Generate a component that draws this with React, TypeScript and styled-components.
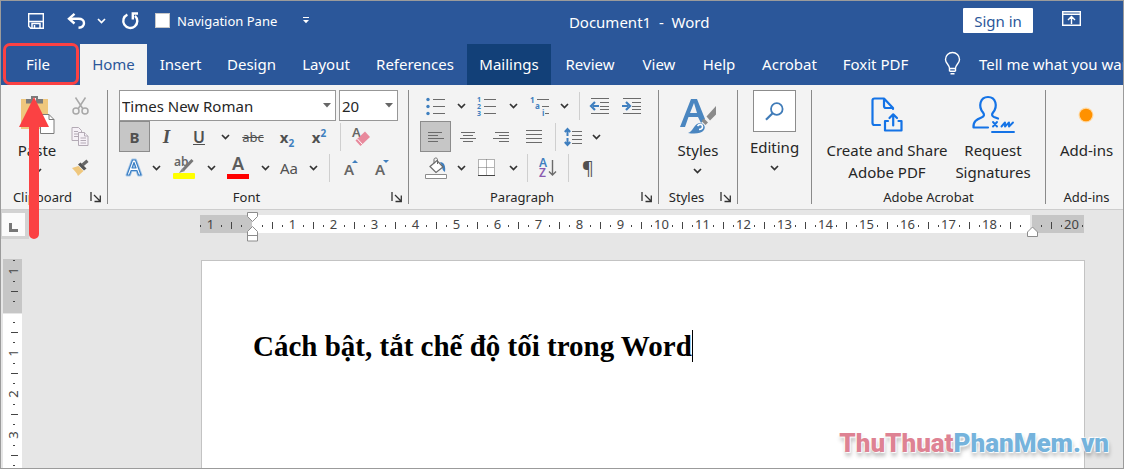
import React from "react";
import styled, { createGlobalStyle, css } from "styled-components";

const ui = `"Noto Sans", "Open Sans", sans-serif`;
const blue = "#2b579a";
const ink = "#262626";
const accent = "#3f7fbf";
const grey = "#6b6b6b";

const GlobalStyle = createGlobalStyle`
  *, *::before, *::after { box-sizing: border-box; }
  body { margin: 0; background: #e6e6e6; }
  button, input, select { font: inherit; color: inherit; }
  svg { flex: none; overflow: visible; }
`;

const Window = styled.div`
  position: relative;
  display: flex;
  flex-direction: column;
  height: 100vh;
  overflow: hidden;
  border: 1px solid #9b9b9b;
  background: #e6e6e6;
  color: ${ink};
  font-family: ${ui};
  font-size: 15px;
  line-height: 22px;
`;

/* ---------- title bar ---------- */

const TitleBar = styled.header`
  display: grid;
  grid-template-columns: auto 1fr auto;
  align-items: center;
  flex: none;
  height: 43px;
  padding: 0 42px 4px 16px;
  background: ${blue};
  color: #fff;
`;

const QuickAccess = styled.div`
  display: flex;
  align-items: center;
`;

const PlainButton = styled.button<{ $w?: number }>`
  display: flex;
  align-items: center;
  justify-content: center;
  flex: none;
  width: ${(p) => (p.$w ? `${p.$w}px` : "auto")};
  height: 20px;
  padding: 0;
  border: 0;
  background: none;
  color: inherit;
`;

const CheckLabel = styled.label`
  display: flex;
  align-items: center;
  gap: 7px;
  font-size: 13px;
  white-space: nowrap;
`;

const CheckBox = styled.input`
  appearance: none;
  width: 15px;
  height: 15px;
  margin: 0;
  border: 1px solid #c8c8c8;
  background: #fff;
`;

const DocTitle = styled.div`
  padding: 2px 20px 0 0;
  text-align: center;
  white-space: pre;
`;

const TitleActions = styled.div`
  display: flex;
  align-items: flex-start;
  justify-content: flex-end;
  gap: 29px;
  height: 25px;
`;

const SignIn = styled.button`
  width: 70px;
  height: 25px;
  padding: 0;
  border: 0;
  border-radius: 1px;
  background: #fff;
  color: ${blue};
  line-height: 24px;
`;

/* ---------- tabs ---------- */

const TabBar = styled.nav`
  display: flex;
  flex: none;
  height: 42px;
  margin-top: -1px;
  padding-top: 1px;
  overflow: hidden;
  background: ${blue};
  color: #fff;
`;

const Tab = styled.button<{ $w: number; $state?: "active" | "hover" }>`
  flex: none;
  width: ${(p) => p.$w}px;
  padding: 0 0 2px;
  border: 0;
  background: none;
  color: #fff;
  white-space: nowrap;
  ${(p) => p.$state === "active" && css`background: #f3f3f3; color: ${blue};`}
  ${(p) => p.$state === "hover" && css`background: #124078;`}
`;

const FileTab = styled(Tab)`
  height: 42px;
  margin: -1px 1px 0 2px;
  padding: 0 6px 0 0;
  border: 3px solid #fb4143;
  border-radius: 7px;
`;

const TellMe = styled.button`
  display: flex;
  flex: none;
  align-items: center;
  gap: 18px;
  margin-left: 23px;
  padding: 0 0 2px;
  border: 0;
  background: none;
  color: #fff;
  white-space: nowrap;
`;

/* ---------- ribbon ---------- */

const Ribbon = styled.section`
  display: flex;
  flex: none;
  padding: 5px 0;
  border-bottom: 1px solid #cdcdcd;
  background: #f3f3f3;
`;

const Group = styled.div<{ $w?: number }>`
  display: flex;
  flex-direction: column;
  flex: ${(p) => (p.$w ? "none" : "1")};
  width: ${(p) => (p.$w ? `${p.$w}px` : "auto")};
  height: 114px;
  &:not(:last-child) { border-right: 1px solid #8a8a8a; }
  &:last-child { padding-left: 4px; }
`;

const GroupBody = styled.div<{ $pad?: number }>`
  display: flex;
  flex: 1;
  justify-content: ${(p) => (p.$pad === undefined ? "center" : "flex-start")};
  padding-left: ${(p) => p.$pad ?? 0}px;
`;

const GroupFooter = styled.div<{ $launcher?: boolean }>`
  display: flex;
  align-items: center;
  gap: 6px;
  height: 14px;
  padding-right: ${(p) => (p.$launcher ? 5 : 0)}px;
  font-size: 13px;
  line-height: 16px;
`;

const GroupName = styled.span`
  flex: 1;
  text-align: center;
  white-space: nowrap;
`;

const Rows = styled.div`
  display: flex;
  flex-direction: column;
`;

const Row = styled.div`
  display: flex;
  align-items: center;
  height: 31px;
`;

const Tool = styled(PlainButton)<{ $on?: boolean }>`
  height: 31px;
  color: #505050;
  ${(p) => p.$on && css`
    border: 1px solid #8c8c8c;
    background: #c6c6c6;
  `}
`;

const Rule = styled.span<{ $w: number }>`
  display: flex;
  justify-content: center;
  width: ${(p) => p.$w}px;
  &::before { content: ""; width: 1px; height: 28px; background: #cfcfcf; }
`;

const Combo = styled.div<{ $w: number }>`
  display: flex;
  align-items: center;
  width: ${(p) => p.$w}px;
  height: 31px;
  margin-right: 3px;
  padding: 0 4px 0 2px;
  border: 1px solid #979797;
  background: #fff;
`;

const ComboInput = styled.input`
  flex: 1;
  min-width: 0;
  padding: 0;
  border: 0;
  outline: 0;
  background: none;
`;

const BigButton = styled.button<{ $w?: number }>`
  display: flex;
  flex-direction: column;
  align-items: center;
  width: ${(p) => (p.$w ? `${p.$w}px` : "auto")};
  padding: 0;
  border: 0;
  background: none;
  line-height: 22px;
  white-space: pre-line;
`;

const BigIcon = styled.span`
  display: flex;
  align-items: center;
  justify-content: center;
  height: 49px;
`;

const BigChevron = styled.span`
  display: flex;
  padding-top: 7px;
`;

const SearchTile = styled.span`
  display: flex;
  align-items: center;
  justify-content: center;
  width: 43px;
  height: 42px;
  margin-bottom: 4px;
  border: 1px solid #8c8c8c;
  background: #fff;
`;

const Glyph = styled.span<{ $size?: number; $weight?: number; $italic?: boolean; $serif?: boolean; $line?: string }>`
  font-family: ${(p) => (p.$serif ? `"Liberation Serif", serif` : ui)};
  font-size: ${(p) => p.$size ?? 16}px;
  font-weight: ${(p) => p.$weight ?? 400};
  font-style: ${(p) => (p.$italic ? "italic" : "normal")};
  text-decoration: ${(p) => p.$line ?? "none"};
  line-height: 22px;
  sub, sup { color: ${accent}; font-size: 10px; line-height: 1px; }
`;

/* ---------- rulers and document ---------- */

const RulerRow = styled.div`
  display: flex;
  flex: none;
  height: 49px;
`;

const TabSelector = styled.button`
  display: flex;
  align-items: center;
  justify-content: center;
  flex: none;
  width: 28px;
  height: 29px;
  padding: 5px 0 0;
  border: solid #d3d3d3;
  border-width: 3px 4px 3px 1px;
  background: #fbfbfb;
`;

const RulerFrame = styled.div`
  position: relative;
  flex: 1;
  min-width: 0;
  height: 18px;
  margin: 5px 39px 0 171px;
`;

const Scale = styled.div<{ $vertical?: boolean }>`
  display: flex;
  height: 100%;
  overflow: hidden;
  color: #444;
  font-size: 13px;
  ${(p) => p.$vertical
    ? css`
        flex: none;
        flex-direction: column;
        width: 19px;
        background: linear-gradient(to bottom, #c6c6c6 54px, #e6e6e6 54px, #e6e6e6 55px, #fff 55px);
      `
    : css`
        background: linear-gradient(to right, #c6c6c6 52px, #fff 52px, #fff calc(100% - 54px), #e6e6e6 calc(100% - 54px), #e6e6e6 calc(100% - 52px), #c6c6c6 calc(100% - 52px));
      `}
`;

const Unit = styled.span<{ $vertical?: boolean }>`
  display: flex;
  flex: none;
  align-items: center;
  justify-content: center;
  line-height: 18px;
  ${(p) => p.$vertical
    ? css`
        height: 41px;
        width: 19px;
        background:
          linear-gradient(#444, #444) 8px 0 / 7px 1px,
          linear-gradient(#444, #444) 10px 10px / 2px 1px,
          linear-gradient(#444, #444) 10px 31px / 2px 1px;
        background-repeat: no-repeat;
        &:first-child { margin-top: -9px; }
        > span { transform: rotate(-90deg); }
      `
    : css`
        width: 41px;
        height: 18px;
        background:
          linear-gradient(#444, #444) 0 7px / 1px 7px,
          linear-gradient(#444, #444) 10px 10px / 1px 2px,
          linear-gradient(#444, #444) 31px 10px / 1px 2px;
        background-repeat: no-repeat;
        &:first-child { margin-left: -10px; }
      `}
`;

const LeftMarker = styled.svg`
  position: absolute;
  left: 47px;
  top: -3px;
`;

const RightMarker = styled.svg`
  position: absolute;
  right: 46px;
  top: 11px;
`;

const Workspace = styled.main`
  display: flex;
  flex: 1;
  min-height: 0;
  padding: 0 38px 0 2px;
`;

const Page = styled.article`
  flex: 1;
  margin: 1px 0 0 179px;
  padding: 65px 50px 0 51px;
  border: solid #c3c3c3;
  border-width: 1px 1px 0;
  background: #fff;
`;

const Line = styled.p`
  display: flex;
  align-items: center;
  margin: 0;
  color: #000;
  font: bold 29px/40px "Liberation Serif", "Times New Roman", serif;
  white-space: nowrap;
`;

const Caret = styled.span`
  width: 1px;
  height: 32px;
  background: #000;
`;

const Arrow = styled.svg`
  position: absolute;
  left: 18px;
  top: 96px;
`;

const Watermark = styled.div`
  position: absolute;
  right: 14px;
  bottom: 5px;
  font: 900 26px/40px Roboto, "Liberation Sans", sans-serif;
  color: #75b3dc;
  text-shadow: 0 0 2px #fff, 1px 1px 1px #fff, -1px -1px 1px #fff, 1px 4px 4px rgba(0, 0, 0, 0.3);
  > span { color: #de8293; }
`;

/* ---------- drawings ---------- */

const Chevron = ({ color = "#333" }: { color?: string }) => (
  <svg width="9" height="6" viewBox="0 0 9 6" fill="none" stroke={color} strokeWidth="1.7"><path d="M1 1l3.5 3.5L8 1" /></svg>
);

const Triangle = () => (
  <svg width="8" height="5" viewBox="0 0 8 5" fill="#666"><path d="M0 0h8L4 4.5z" /></svg>
);

const LauncherIcon = () => (
  <svg width="12" height="11" viewBox="0 0 12 11" fill="none" stroke="#333" strokeWidth="1.3"><path d="M1 0v9M4 3l6 6M10.3 3.5v6H4.5" /></svg>
);

const SaveIcon = () => (
  <svg width="16" height="16" viewBox="0 0 16 16" fill="none" stroke="#fff" strokeWidth="1.4"><path d="M.7.7h14.6v14.600H2.700l-2-2zM1 8.500h14" /><path d="M4 15v-4.500h8V15M6.500 12v3" strokeWidth="1.500" /></svg>
);

const UndoIcon = () => (
  <svg width="19" height="16" viewBox="0 0 19 16" fill="none" stroke="#fff" strokeWidth="2.400"><path d="M7.500.8L2 5.700l5.500 4.800" /><path d="M2.500 5.700h9.200c3.200 0 5.300 1.800 5.300 4.300s-2 4.600-5.500 4.800" /></svg>
);

const RedoIcon = () => (
  <svg width="17" height="17" viewBox="0 0 17 17" fill="none" stroke="#fff" strokeWidth="2.400"><path d="M5.400 2.600A7 7 0 1 0 13 3.800" /><path d="M16 1.500h-5.200v6" /></svg>
);

const CustomizeIcon = () => (
  <svg width="6" height="7" viewBox="0 0 6 7" fill="#fff"><path d="M0 0h6v1H0zM0 3h6L3 6.200z" /></svg>
);

const RibbonOptionsIcon = () => (
  <svg width="19" height="15" viewBox="0 0 19 15" fill="none" stroke="#fff" strokeWidth="1.400"><path d="M.7.7h17.600v13.600H.7zM1 3.300h17M9.500 13V5.500M6 9l3.500-3.500L13 9" /></svg>
);

const BulbIcon = () => (
  <svg width="17" height="23" viewBox="0 0 17 23" fill="none" stroke="#fff" strokeWidth="1.400"><path d="M5.500 16.500c0-4-4-5-4-9a7 7 0 0 1 14 0c0 4-4 5-4 9zM5.500 19.200h6M6.500 21.700h4M5.500 16.500v2.700M11.500 16.500v2.700" /></svg>
);

const PasteIcon = () => (
  <svg width="35" height="38" viewBox="0 0 35 38">
    <path d="M1 3h27v30H1z" fill="#efc77d" />
    <path d="M6 7.500V3h5V0h7v3h5v4.500z" fill="#7b7b7b" />
    <path d="M13 2h3v3h-3z" fill="#f3f3f3" />
    <path d="M20.500 18.500h8.500l5 5V37.500H20.500z" fill="#fff" stroke="#7b7b7b" />
    <path d="M29 18.500v5h5" fill="none" stroke="#7b7b7b" />
  </svg>
);

const CutIcon = () => (
  <svg width="17" height="18" viewBox="0 0 17 18" fill="none" stroke="#a8a8a8" strokeWidth="1.500"><path d="M3.500.5l7.500 11.500M13.500.5L6 12" /><circle cx="4" cy="14" r="3" /><circle cx="13" cy="14" r="3" /></svg>
);

const CopyIcon = () => (
  <svg width="18" height="19" viewBox="0 0 18 19" fill="#f6f1f7" stroke="#b3aab5"><path d="M1 .5h6.500l3 3v10H1z" /><path d="M3 4.500h4M3 7h4M3 9.500h4" /><path d="M7.500 5.500h6l3.500 3.500v9.500H7.500z" /><path d="M13.500 5.500V9H17M9.500 11h5.500M9.500 13.500h5.500M9.500 16h5.500" /></svg>
);

const PainterIcon = () => (
  <svg width="18" height="16" viewBox="0 0 18 16"><path d="M1 8l6.500-2 5 5L7 16C6 13 3 10 1 8z" fill="#efc77d" /><path d="M7 4.500l2.500-2 6 6-2.500 2z" fill="#555" /><path d="M11.500 5L16.500.8" stroke="#666" strokeWidth="3.200" /></svg>
);

const TextEffectsIcon = () => (
  <svg width="18" height="19" viewBox="0 0 18 19" fill="none" strokeLinejoin="round"><path d="M2 17L7.500 2h3L16 17h-2.500l-1.600-4.500H6.200L4.500 17zM7 10h4L9 4.500z" stroke="#a9c9e8" strokeWidth="3" /><path d="M2 17L7.500 2h3L16 17h-2.500l-1.600-4.500H6.200L4.500 17zM7 10h4L9 4.500z" fill="#fff" stroke="#3b7fc4" strokeWidth="1.200" /></svg>
);

const HighlightIcon = () => (
  <svg width="22" height="22" viewBox="0 0 22 22"><text x="1" y="9" fontFamily="Noto Sans" fontSize="12" fontWeight="600" fill="#666">ab</text><path d="M19.500 3L10 13" stroke="#777" strokeWidth="3" /><path d="M9 11.500l3 2.500-6 2z" fill="#888" /><rect y="16" width="22" height="6" rx="1" fill="#ffff00" /></svg>
);

const FontColorIcon = () => (
  <svg width="22" height="22" viewBox="0 0 22 22"><text x="11" y="13" textAnchor="middle" fontFamily="Noto Sans" fontSize="18" fontWeight="600" fill="#5c5c5c">A</text><rect y="17" width="22" height="5" fill="#f00" /></svg>
);

const EraserIcon = () => (
  <svg width="20" height="20" viewBox="0 0 20 20"><text x="1" y="10" fontFamily="Noto Sans" fontSize="13" fontWeight="600" fill="#666">A</text><path d="M4.500 13.500L14 4.500l5 5.500-9.500 9z" fill="#e8899c" /><path d="M6.500 12l5 5.500" stroke="#fff" /></svg>
);

const SizeIcon = ({ down = false }: { down?: boolean }) => (
  <svg width="18" height="18" viewBox="0 0 18 18"><text x="2" y="16" fontFamily="Noto Sans" fontSize="15" fontWeight="600" fill="#666">A</text><path d={down ? "M10 1h6l-3 3z" : "M10 4h6l-3-3z"} fill={accent} /></svg>
);

const BulletsIcon = () => (
  <svg width="20" height="18" viewBox="0 0 20 18"><g fill={accent}><circle cx="2" cy="2.500" r="1.700" /><circle cx="2" cy="9.500" r="1.700" /><circle cx="2" cy="16.500" r="1.700" /></g><path d="M7 2.500h12M7 9.500h12M7 16.500h12" stroke={grey} /></svg>
);

const NumberingIcon = () => (
  <svg width="20" height="20" viewBox="0 0 20 20"><g fill={accent} fontFamily="Noto Sans" fontSize="7" fontWeight="700"><text x="0" y="6">1</text><text x="0" y="13">2</text><text x="0" y="20">3</text></g><path d="M7 3.500h12M7 10.500h12M7 17.500h12" stroke={grey} /></svg>
);

const MultilevelIcon = () => (
  <svg width="20" height="20" viewBox="0 0 20 20"><g fill={accent} fontFamily="Noto Sans" fontSize="8" fontWeight="700"><text x="0" y="7">1</text><text x="5" y="13">a</text><text x="12" y="20">i</text></g><path d="M7 3.500h12M12 10.500h7M15 17.500h4" stroke={grey} /></svg>
);

const IndentIcon = ({ right = false }: { right?: boolean }) => (
  <svg width="19" height="18" viewBox="0 0 19 18"><path d="M1 1.500h18M10 5.500h9M10 9.500h9M10 12.500h9M1 16.500h18" stroke={grey} /><path d={right ? "M0 9h6M4 5l4 4-4 4" : "M9 9H3M5 5L1 9l4 4"} stroke={accent} strokeWidth="2.200" fill="none" /></svg>
);

const AlignIcon = ({ kind }: { kind: "left" | "center" | "right" | "justify" }) => {
  const lines = kind === "justify" ? [16, 16, 16, 16] : [14, 10, 16, 10];
  const step = kind === "justify" ? 4 : 3;
  return (
    <svg width="16" height="14" viewBox="0 0 16 14" stroke={grey}>
      {lines.map((w, i) => {
        const x = kind === "left" ? 0 : kind === "right" ? 16 - w : (16 - w) / 2;
        return <path key={i} d={`M${x} ${(kind === "justify" ? 0.5 : 2.5) + i * step}h${w}`} />;
      })}
    </svg>
  );
};

const SpacingIcon = () => (
  <svg width="18" height="20" viewBox="0 0 18 20" fill="none"><path d="M3.500 2v7M.8 5l2.700-3 2.700 3M3.500 11v7M.8 15l2.700 3 2.700-3" stroke={accent} strokeWidth="2" /><path d="M8 4.500h10M8 8.500h10M8 12.500h10M8 16.500h10" stroke={grey} /></svg>
);

const FillIcon = () => (
  <svg width="22" height="22" viewBox="0 0 22 22" fill="none"><path d="M15 5c4 0 6 4 5 10-2-1-3-3-3-6z" fill={accent} /><path d="M5 9.500L12 3.500l6 6.500-7 5.500z" fill="#fff" stroke={grey} strokeWidth="1.200" /><path d="M9 6.500V2.500c0-2 3.500-2 3.500 0V7" stroke={grey} /><path d="M.5 17.500h21v4H.5z" fill="#fff" stroke="#8c8c8c" /></svg>
);

const BordersIcon = () => (
  <svg width="18" height="18" viewBox="0 0 18 18" fill="#fff"><path d="M.5.5h16v16H.5zM8.500.5v16M.5 8.500h16" stroke={grey} strokeDasharray="1 1" /><path d="M0 16.500h17" stroke="#444" /></svg>
);

const SortIcon = () => (
  <svg width="18" height="20" viewBox="0 0 18 20"><text x="0" y="9" fontFamily="Noto Sans" fontSize="12" fontWeight="600" fill={accent}>A</text><text x="0" y="19" fontFamily="Noto Sans" fontSize="12" fontWeight="600" fill="#8b5bb0">Z</text><path d="M13.500 2v15M10 13.500l3.500 3.500 3.500-3.500" fill="none" stroke={grey} strokeWidth="1.400" /></svg>
);

const StylesIcon = () => (
  <svg width="38" height="38" viewBox="0 0 38 38">
    <path d="M1 31L12 3h6l8 20-4 4-3-6H9.500L6 31zM11 17h7l-3-10z" fill="#4a86c0" />
    <path d="M9 37c5-1 6-10 12-10 4 0 6 4 4 7-3 4-10 4-16 3z" fill="#4a86c0" />
    <path d="M18.500 30c2-2.500 5-2 5 .5s-2 3-3.500 3" fill="none" stroke="#fff" strokeWidth="1.600" />
    <path d="M25 22.500l4 4-2.500 2.500-4-4zM27.500 20.500L37 10v8.500l-6 6z" fill="#8a8a8a" />
  </svg>
);

const SearchIcon = () => (
  <svg width="19" height="19" viewBox="0 0 19 19" fill="none" stroke="#3f7bb8" strokeWidth="1.800"><circle cx="11.800" cy="7" r="5.800" /><path d="M7.600 11.200L1 17.800" strokeWidth="2.200" /></svg>
);

const SharePdfIcon = () => (
  <svg width="32" height="35" viewBox="0 0 32 35" fill="none" stroke="#1473e6" strokeWidth="2.200" strokeLinecap="round" strokeLinejoin="round"><path d="M9 28H3.500C2 28 1.500 27 1.500 26V3.500c0-1.500 1-2 2-2H13l9 9.500v1M13 1.500V9c0 1.500.8 2 2 2h7" /><path d="M17 24h-3v9.500h16.500V24h-3M22.200 28.500V17.500M18.500 21l3.700-3.700L26 21" /></svg>
);

const SignatureIcon = () => (
  <svg width="43" height="39" viewBox="0 0 43 39" fill="none" stroke="#1473e6" strokeWidth="2.200" strokeLinecap="round" strokeLinejoin="round"><path d="M16 32.500H1.500c-.500-6 3-8 8-10 3-1.200 3-3 1.500-5C6 11.500 8 2 16 2s10 9.500 5 15.500c-1.500 2-1.200 3.500 1 4.500l4 1.500" /><path d="M21 27l4 4.500M25 27l-4 4.500M29.500 31.500l3.500-4v4l4-4v4l4-4M20 37h22" strokeWidth="1.900" /></svg>
);

const AddInsIcon = () => (
  <svg width="16" height="16" viewBox="0 0 16 16"><circle cx="8" cy="8" r="7.500" fill="#ffd9a3" /><circle cx="8" cy="8" r="6.300" fill="#ff9100" /></svg>
);

/* ---------- pieces ---------- */

const Drop = ({ w, label }: { w: number; label: string }) => (
  <Tool $w={w} aria-label={label}><Chevron /></Tool>
);

const Footer = ({ name, launcher }: { name: string; launcher?: boolean }) => (
  <GroupFooter $launcher={launcher}>
    <GroupName>{name}</GroupName>
    {launcher && <PlainButton $w={12} aria-label={`${name} settings`}><LauncherIcon /></PlainButton>}
  </GroupFooter>
);

const Ticks = ({ marks, vertical }: { marks: string[]; vertical?: boolean }) => (
  <Scale $vertical={vertical}>
    {marks.map((m, i) => <Unit key={i} $vertical={vertical}><span>{m}</span></Unit>)}
  </Scale>
);

const tabs: { name: string; w: number; state?: "active" | "hover" }[] = [
  { name: "Home", w: 67, state: "active" },
  { name: "Insert", w: 67 },
  { name: "Design", w: 75 },
  { name: "Layout", w: 74 },
  { name: "References", w: 104 },
  { name: "Mailings", w: 84, state: "hover" },
  { name: "Review", w: 78 },
  { name: "View", w: 60 },
  { name: "Help", w: 60 },
  { name: "Acrobat", w: 81 },
  { name: "Foxit PDF", w: 91 },
];

const horizontalMarks = ["1", "", ...Array.from({ length: 18 }, (_, i) => String(i + 1)), "", "20"];
const verticalMarks = ["1", "", "1", "2", "3", "4"];

export default function App() {
  return (
    <>
      <GlobalStyle />
      <Window>
        <TitleBar>
          <QuickAccess>
            <PlainButton $w={38} aria-label="Save"><SaveIcon /></PlainButton>
            <PlainButton $w={42} aria-label="Undo"><UndoIcon /></PlainButton>
            <PlainButton $w={8} aria-label="Undo history"><Chevron color="#fff" /></PlainButton>
            <PlainButton $w={50} aria-label="Redo"><RedoIcon /></PlainButton>
            <CheckLabel><CheckBox type="checkbox" />Navigation Pane</CheckLabel>
            <PlainButton $w={58} aria-label="Customize toolbar"><CustomizeIcon /></PlainButton>
          </QuickAccess>
          <DocTitle>{"Document1  -  Word"}</DocTitle>
          <TitleActions>
            <SignIn>Sign in</SignIn>
            <PlainButton $w={19} aria-label="Ribbon display options"><RibbonOptionsIcon /></PlainButton>
          </TitleActions>
        </TitleBar>

        <TabBar>
          <FileTab $w={76}>File</FileTab>
          {tabs.map((t) => <Tab key={t.name} $w={t.w} $state={t.state}>{t.name}</Tab>)}
          <TellMe><BulbIcon />Tell me what you want to do</TellMe>
        </TabBar>

        <Ribbon>
          <Group $w={107}>
            <GroupBody $pad={17}>
              <BigButton $w={38}><BigIcon><PasteIcon /></BigIcon>Paste<BigChevron><Chevron /></BigChevron></BigButton>
              <Rows>
                <Row><Tool $w={48} aria-label="Cut"><CutIcon /></Tool></Row>
                <Row><Tool $w={48} aria-label="Copy"><CopyIcon /></Tool></Row>
                <Row><Tool $w={48} aria-label="Format painter"><PainterIcon /></Tool></Row>
              </Rows>
            </GroupBody>
            <Footer name="Clipboard" launcher />
          </Group>

          <Group $w={301}>
            <GroupBody $pad={11}>
              <Rows>
                <Row>
                  <Combo $w={217}><ComboInput aria-label="Font" defaultValue="Times New Roman" /><Triangle /></Combo>
                  <Combo $w={59}><ComboInput aria-label="Font size" defaultValue="20" /><Triangle /></Combo>
                </Row>
                <Row>
                  <Tool $w={31} $on><Glyph $weight={700} $size={15}>B</Glyph></Tool>
                  <Tool $w={33}><Glyph $size={19} $weight={700} $italic $serif>I</Glyph></Tool>
                  <Tool $w={32}><Glyph $weight={600} $line="underline">U</Glyph></Tool>
                  <Drop w={20} label="Underline style" />
                  <Tool $w={36}><Glyph $size={13} $line="line-through">abc</Glyph></Tool>
                  <Tool $w={32}><Glyph $weight={700} $size={15}>x<sub>2</sub></Glyph></Tool>
                  <Tool $w={32}><Glyph $weight={700} $size={15}>x<sup>2</sup></Glyph></Tool>
                  <Rule $w={10} />
                  <Tool $w={32} aria-label="Clear formatting"><EraserIcon /></Tool>
                </Row>
                <Row>
                  <Tool $w={30} aria-label="Text effects"><TextEffectsIcon /></Tool>
                  <Drop w={14} label="Text effects menu" />
                  <Tool $w={42} aria-label="Highlight"><HighlightIcon /></Tool>
                  <Drop w={12} label="Highlight color" />
                  <Tool $w={42} aria-label="Font color"><FontColorIcon /></Tool>
                  <Drop w={12} label="Font colors" />
                  <Tool $w={36}><Glyph $size={15}>Aa</Glyph></Tool>
                  <Drop w={12} label="Change case" />
                  <Rule $w={20} />
                  <Tool $w={24} aria-label="Grow font"><SizeIcon /></Tool>
                  <Tool $w={38} aria-label="Shrink font"><SizeIcon down /></Tool>
                </Row>
              </Rows>
            </GroupBody>
            <Footer name="Font" launcher />
          </Group>

          <Group $w={250}>
            <GroupBody $pad={11}>
              <Rows>
                <Row>
                  <Tool $w={32} aria-label="Bullets"><BulletsIcon /></Tool>
                  <Drop w={18} label="Bullet library" />
                  <Tool $w={34} aria-label="Numbering"><NumberingIcon /></Tool>
                  <Drop w={18} label="Numbering library" />
                  <Tool $w={36} aria-label="Multilevel list"><MultilevelIcon /></Tool>
                  <Drop w={12} label="List library" />
                  <Rule $w={18} />
                  <Tool $w={22} aria-label="Decrease indent"><IndentIcon /></Tool>
                  <Tool $w={42} aria-label="Increase indent"><IndentIcon right /></Tool>
                </Row>
                <Row>
                  <Tool $w={31} $on aria-label="Align left"><AlignIcon kind="left" /></Tool>
                  <Tool $w={34} aria-label="Center"><AlignIcon kind="center" /></Tool>
                  <Tool $w={32} aria-label="Align right"><AlignIcon kind="right" /></Tool>
                  <Tool $w={34} aria-label="Justify"><AlignIcon kind="justify" /></Tool>
                  <Rule $w={8} />
                  <Tool $w={28} aria-label="Line spacing"><SpacingIcon /></Tool>
                  <Drop w={18} label="Line spacing options" />
                </Row>
                <Row>
                  <Tool $w={32} aria-label="Shading"><FillIcon /></Tool>
                  <Drop w={18} label="Shading color" />
                  <Tool $w={34} aria-label="Borders"><BordersIcon /></Tool>
                  <Drop w={18} label="Border options" />
                  <Rule $w={10} />
                  <Tool $w={32} aria-label="Sort"><SortIcon /></Tool>
                  <Rule $w={8} />
                  <Tool $w={32}><Glyph $size={18}>¶</Glyph></Tool>
                </Row>
              </Rows>
            </GroupBody>
            <Footer name="Paragraph" launcher />
          </Group>

          <Group $w={79}>
            <GroupBody>
              <BigButton><BigIcon><StylesIcon /></BigIcon>Styles<BigChevron><Chevron /></BigChevron></BigButton>
            </GroupBody>
            <Footer name="Styles" launcher />
          </Group>

          <Group $w={74}>
            <GroupBody>
              <BigButton><SearchTile><SearchIcon /></SearchTile>Editing<BigChevron><Chevron /></BigChevron></BigButton>
            </GroupBody>
          </Group>

          <Group $w={234}>
            <GroupBody $pad={9}>
              <BigButton $w={132}><BigIcon><SharePdfIcon /></BigIcon>{"Create and Share\nAdobe PDF"}</BigButton>
              <BigButton $w={80}><BigIcon><SignatureIcon /></BigIcon>{"Request\nSignatures"}</BigButton>
            </GroupBody>
            <Footer name="Adobe Acrobat" />
          </Group>

          <Group>
            <GroupBody>
              <BigButton><BigIcon><AddInsIcon /></BigIcon>Add-ins</BigButton>
            </GroupBody>
            <Footer name="Add-ins" />
          </Group>
        </Ribbon>

        <RulerRow>
          <TabSelector aria-label="Tab stop type">
            <svg width="9" height="9" viewBox="0 0 9 9" fill="none" stroke="#777" strokeWidth="3"><path d="M1.500 0v7.500H9" /></svg>
          </TabSelector>
          <RulerFrame>
            <Ticks marks={horizontalMarks} />
            <LeftMarker width="11" height="30" viewBox="0 0 11 30" fill="#fff" stroke="#8c8c8c">
              <path d="M.5.5h10v4l-5 5-5-5zM.5 19.500l5-5 5 5v9.500H.5zM.5 23.500h10" />
            </LeftMarker>
            <RightMarker width="11" height="11" viewBox="0 0 11 11" fill="#fff" stroke="#8c8c8c">
              <path d="M.5 6l5-5 5 5v4.500H.5z" />
            </RightMarker>
          </RulerFrame>
        </RulerRow>

        <Workspace>
          <Ticks marks={verticalMarks} vertical />
          <Page>
            <Line>Cách bật, tắt chế độ tối trong Word<Caret /></Line>
          </Page>
        </Workspace>

        <Arrow width="32" height="144" viewBox="0 0 32 144" fill="#fb4143">
          <path d="M15 0l15 30H20v107a5 5 0 0 1-10 0V30H0z" />
        </Arrow>
        <Watermark><span>ThuThuat</span>PhanMem.vn</Watermark>
      </Window>
    </>
  );
}
